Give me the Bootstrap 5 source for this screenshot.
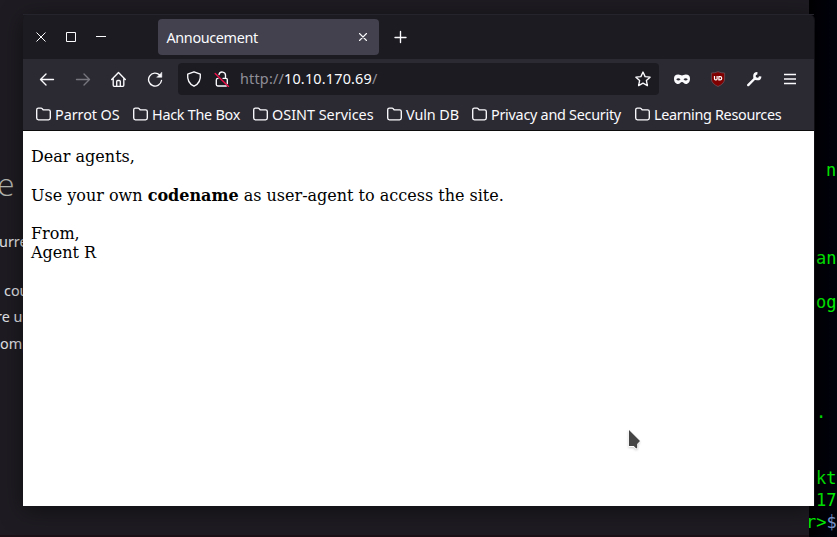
<!DOCTYPE html>
<html lang="en">
<head>
<meta charset="utf-8">
<title>Annoucement</title>
<link href="https://cdn.jsdelivr.net/npm/bootstrap@5.3.0/dist/css/bootstrap.min.css" rel="stylesheet">
<style>
body{width:837px;height:537px;background:#1e1c22;font-family:"Noto Sans",sans-serif;font-size:14.4px;line-height:20px;color:#fbfbfe}
svg{display:block;flex:none}
.ico{fill:none;stroke:#fbfbfe;stroke-width:1.35;stroke-linecap:round;stroke-linejoin:round}
.desk-text{white-space:pre;color:#e2e2e6}
.desk-text span,.term span{position:absolute;white-space:pre}
.desk-text .big-letter{font-size:32px;font-weight:200;line-height:40px;color:#b5b5b0;font-family:"Open Sans","Noto Sans",sans-serif}
.term{left:809px;top:0;width:28px;height:537px;background:linear-gradient(90deg,#000003,#00030c);color:#00f000;font-family:"DejaVu Sans Mono",monospace;font-size:17px;line-height:22px}
.term .dollar{color:#7590c8}
.desk-foot{left:0;top:535px;width:809px;height:2px;background:#1c1117}
.browser{left:23px;top:14px;width:791px;height:492px;border-radius:6px 6px 0 0;box-shadow:0 4px 22px rgba(0,0,0,.5),1px 0 0 #15141a;background:#1c1b22}
.titlebar{height:45px;padding-left:12px;border-top:1px solid #25232b}
.tab-item{width:221px;height:36px;background:#42414d;border-radius:4px;padding:0 11px 0 8.5px;margin-left:51px}
.tab-title{padding-top:1px;letter-spacing:-.36px}
.new-tab{margin-left:15px}
.toolbar{height:40px;background:#2b2a33;padding-left:16px}
.address{width:481px;height:32px;background:#1c1b22;border-radius:4px;padding:0 8px}
.address-text{padding-left:10px;letter-spacing:.19px}
.scheme{color:#8f8e97}
.bookmarks{height:32px;background:#2b2a33;border-bottom:1px solid #0c0c0d;padding-left:13px}
.bookmarks svg{margin-right:4px;margin-top:-1px}
.bm{white-space:nowrap;flex:none}
.tight{letter-spacing:-.27px}
.document{height:375px;padding:16.1px 8px 0;font-family:"DejaVu Serif",serif;font-size:16px;line-height:19.2px}
</style>
<script src="https://cdn.jsdelivr.net/npm/bootstrap@5.3.0/dist/js/bootstrap.bundle.min.js"></script>
</head>
<body class="position-relative overflow-hidden m-0">
<div class="desk-text">
<span class="big-letter" style="left:-3px;top:164px">e</span>
<span style="left:-1px;top:232px">urren</span>
<span style="left:4px;top:281px">cou</span>
<span style="left:-4px;top:307px">re us</span>
<span style="left:0;top:334px">omp</span>
</div>
<div class="desk-foot position-absolute"></div>
<div class="term position-absolute overflow-hidden">
<span style="left:17px;top:159px">n</span>
<span style="left:7px;top:247px">an</span>
<span style="left:7px;top:291px">og</span>
<span style="left:7px;top:401px">.</span>
<span style="left:7px;top:467px">kt</span>
<span style="left:7px;top:489px">17</span>
<span style="left:-3px;top:511px">r&gt;<b class="dollar fw-normal">$</b></span>
</div>
<div class="browser position-absolute overflow-visible">
<div class="titlebar d-flex align-items-center">
<svg width="72" height="12" fill="none" stroke="#fbfbfe" stroke-width="1" viewBox="0 0 72 12"><path d="M1.500 1.500l9 9m0-9l-9 9"/><path d="M31.500 1.500h9v9h-9zM61 5.500h10"/></svg>
<div class="tab-item d-flex align-items-center justify-content-between"><span class="tab-title">Annoucement</span>
<svg class="ico" style="stroke-width:1.1" width="10" height="10"><path d="M1.500 1.500l7 7m0-7l-7 7"/></svg></div>
<svg class="ico new-tab" width="14" height="14"><path d="M6.500 1.500v11M1 7.500h11"/></svg>
</div>
<div class="toolbar d-flex align-items-center">
<svg class="ico" width="16" height="16"><path d="M14.500 8.500h-13M7 3L1.500 8.500 7 14"/></svg>
<svg class="ico" style="margin-left:20px;stroke:#77767e" width="16" height="16"><path d="M1.500 8.500h13M9 3l5.500 5.500L9 14"/></svg>
<svg class="ico" style="margin-left:20px" width="16" height="16"><path d="M.7 8.500L7.500 1.500l6.800 7M2.200 7.500v6.800q0 1 1 1h8.600q1 0 1-1V7.500M5.700 15V10.500q0-1 1-1h1.600q1 0 1 1V15"/></svg>
<svg class="ico" style="margin-left:20px" width="16" height="16"><path d="M14.500 9.500A6.500 6.500 0 1 1 12.700 4"/><path d="M14.800 1.500v4.800H10z" fill="#fbfbfe" stroke-width=".5"/></svg>
<div class="address d-flex align-items-center" style="margin-left:15px">
<svg class="ico" width="16" height="16"><path d="M8 .8l6.300 2.400c.6 6-1.700 9.800-6.300 12-4.600-2.200-6.900-6-6.300-12z"/></svg>
<svg class="ico" style="margin-left:12px" width="16" height="16"><path d="M5 3.600a3.300 3.300 0 0 1 6.500 1V7M9 7.300h3q1.300 0 1.300 1.300v4M4 7.300q-1.700 0-1.700 1.700v4.600q0 1.400 1.400 1.400h8.600"/><path d="M1.200 2.500l13.300 13" stroke="#f2104a" stroke-width="1.400"/></svg>
<span class="address-text flex-grow-1"><span class="scheme">http://</span>10.10.170.69<span class="scheme">/</span></span>
<svg class="ico" width="16" height="16"><path d="M8 1l2.100 4.600 5 .6-3.700 3.400 1 5L8 12.100l-4.400 2.500 1-5L.9 6.200l5-.6z"/></svg>
</div>
<svg style="margin-left:15px" width="16" height="16"><path fill="#fbfbfe" fill-rule="evenodd" d="M4.200 3.500C6 3.500 7 4.500 8 4.500s2-1 3.800-1C14.500 3.500 16 4.800 16 7.500c0 3.200-1.700 5.500-4 5.500-2 0-2.500-2-4-2s-2 2-4 2c-2.300 0-4-2.300-4-5.500 0-2.700 1.500-4 4.200-4zM2.200 8.300q2.300 2.600 4.300 0Q4.300 6 2.200 8.300zm7.300 0q2.200 2.600 4.300 0-2.100-2.300-4.300 0z"/></svg>
<svg style="margin-left:20px" width="16" height="16"><path fill="#800000" stroke="#68515b" stroke-width=".8" d="M8 .7Q11 2 14.600 2v6q0 4.500-6.600 7.500Q1.400 12.500 1.400 8V2Q5 2 8 .7z"/><path fill="none" stroke="#fff" stroke-width="1.200" d="M4.500 5v2.700q0 1.200 1 1.200h.6q1 0 1-1.200V5M8.900 5.600v3.300h1.300q1.500 0 1.500-1.650t-1.500-1.650H8.300"/></svg>
<svg style="margin-left:20px" width="16" height="16"><path d="M2.200 14.100L9.300 7" stroke="#fbfbfe" stroke-width="2.400" stroke-linecap="round"/><path d="M11.400 2.200A2.900 2.900 0 1 0 14.200 5.300" fill="none" stroke="#fbfbfe" stroke-width="2.500"/></svg>
<svg class="ico" style="margin-left:20px;stroke-linecap:butt" width="16" height="16"><path d="M2 3.500h12M2 8h12M2 12.500h12"/></svg>
</div>
<svg width="0" height="0" class="position-absolute"><symbol id="folder" viewBox="0 0 15 14"><path d="M.7 2.800q0-1.700 1.700-1.700h2.700q.6 0 1 .5l1 1.200h5.500q1.700 0 1.700 1.700v6.600q0 1.700-1.700 1.700H2.400Q.7 12.800.7 11.100z"/></symbol></svg>
<div class="bookmarks d-flex align-items-center">
<div class="bm d-flex align-items-center" style="width:97px"><svg class="ico" width="15" height="14"><use href="#folder"/></svg><span style="letter-spacing:-.06px">Parrot OS</span></div>
<div class="bm d-flex align-items-center" style="width:120px"><svg class="ico" width="15" height="14"><use href="#folder"/></svg><span class="tight">Hack The Box</span></div>
<div class="bm d-flex align-items-center" style="width:134px"><svg class="ico" width="15" height="14"><use href="#folder"/></svg><span>OSINT Services</span></div>
<div class="bm d-flex align-items-center" style="width:85px"><svg class="ico" width="15" height="14"><use href="#folder"/></svg><span style="letter-spacing:-.1px">Vuln DB</span></div>
<div class="bm d-flex align-items-center" style="width:163px"><svg class="ico" width="15" height="14"><use href="#folder"/></svg><span class="tight">Privacy and Security</span></div>
<div class="bm d-flex align-items-center"><svg class="ico" width="15" height="14"><use href="#folder"/></svg><span style="letter-spacing:-.31px">Learning Resources</span></div>
</div>
<div class="document bg-white text-black">Dear agents,<br><br>Use your own <b>codename</b> as user-agent to access the site.<br><br>From,<br>Agent R</div>
</div>
<svg class="position-absolute" style="left:626px;top:427px;filter:drop-shadow(0 1px 1px #0003)" width="16" height="26"><path d="M2.500 2.500v17.500h5l2.500 2.500 2-1.500v-4l2-2.500z" fill="#fff"/><path d="M3 3v16h4.800l2.400 2.500 1-.8v-3.700l2.800-3z" fill="#454545"/></svg>
</body>
</html>
